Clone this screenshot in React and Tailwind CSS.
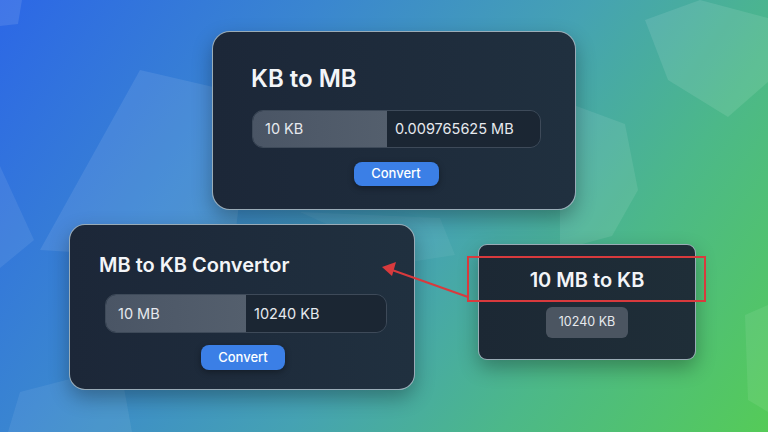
import React from 'react';

const FONT = { fontFamily: 'Inter, "Noto Sans", "Liberation Sans", sans-serif' };

function Backdrop() {
  // soft translucent polygons floating on the gradient
  return (
    <svg className="absolute inset-0" width="768" height="432" viewBox="0 0 768 432">
      <polygon points="0,0 22,0 18,24 0,26" fill="#fff" fillOpacity="0.1" />
      <polygon points="140,70 252,96 232,262 40,250" fill="#fff" fillOpacity="0.09" />
      <polygon points="0,166 34,240 0,268" fill="#fff" fillOpacity="0.08" />
      <polygon points="645,20 700,0 768,18 768,82 728,117 668,80" fill="#fff" fillOpacity="0.1" />
      <polygon points="560,100 625,124 638,190 612,236 560,250" fill="#fff" fillOpacity="0.09" />
      <polygon points="745,315 768,305 768,412 748,400" fill="#fff" fillOpacity="0.08" />
      <polygon points="20,392 120,366 132,432 8,432" fill="#fff" fillOpacity="0.07" />
      <polygon points="300,212 440,218 455,255 410,262" fill="#fff" fillOpacity="0.05" />
    </svg>
  );
}

function InputPair({ left, right, leftWidth, width, height }) {
  return (
    <div
      className="flex overflow-hidden rounded-[11px] border border-[#3e4a59] text-[14.5px] text-[#e6e9ee]"
      style={{ width, height }}
    >
      <div
        className="flex items-center pl-3 bg-gradient-to-r from-[#4a5565] to-[#545f6d]"
        style={{ width: leftWidth }}
      >
        {left}
      </div>
      <div className="flex flex-1 items-center pl-2 bg-[#1b2633]">{right}</div>
    </div>
  );
}

function ConvertButton({ className = '' }) {
  return (
    <button className={`h-6 rounded-lg bg-[#3b7fe6] text-[13px] font-medium text-white shadow-[0_2px_6px_rgba(0,0,0,0.35)] ${className}`}>
      Convert
    </button>
  );
}

export default function App() {
  return (
    <div
      className="relative w-[768px] h-[432px] overflow-hidden bg-[linear-gradient(125deg,#2c67e6_0%,#3a86d0_30%,#45a2b3_55%,#4cb889_75%,#55cb58_100%)]"
      style={FONT}
    >
      <Backdrop />

      {/* KB to MB */}
      <div className="absolute left-[212px] top-[31px] w-[364px] h-[179px] rounded-[18px] border-[1.5px] border-[#cfe3ec]/70 bg-gradient-to-r from-[#1c2738] to-[#20303f] shadow-[0_8px_20px_rgba(0,0,0,0.3)] pt-[35px] pl-[38px]">
        <h1 className="text-[24px] leading-[24px] font-semibold text-[#f3f5f8]">KB to MB</h1>
        <div className="mt-[19px] ml-px">
          <InputPair left="10 KB" right="0.009765625 MB" leftWidth={134} width={289} height={38} />
        </div>
        <div className="flex w-[290px] justify-center mt-[14px]">
          <ConvertButton className="w-[85px]" />
        </div>
      </div>

      {/* MB to KB Convertor */}
      <div className="absolute left-[69px] top-[224px] w-[346px] h-[166px] rounded-[16px] border-[1.5px] border-[#cfe3ec]/70 bg-gradient-to-r from-[#1c2738] to-[#20303f] shadow-[0_8px_20px_rgba(0,0,0,0.3)] pt-[30px] pl-[29px]">
        <h2 className="text-[20px] leading-[20px] font-semibold text-[#f3f5f8]">MB to KB Convertor</h2>
        <div className="mt-[19px] ml-[6px]">
          <InputPair left="10 MB" right="10240 KB" leftWidth={140} width={282} height={39} />
        </div>
        <div className="flex w-[288px] justify-center mt-[12px]">
          <ConvertButton className="w-[84px] h-[25px]" />
        </div>
      </div>

      {/* 10 MB to KB */}
      <div className="absolute left-[478px] top-[244px] w-[218px] h-[116px] rounded-[9px] border-[1.5px] border-[#cfe3ec]/70 bg-gradient-to-r from-[#1c2834] to-[#1f2e38] shadow-[0_8px_20px_rgba(0,0,0,0.3)] pt-[25px] flex flex-col items-center">
        <h3 className="text-[20px] leading-[21px] font-semibold text-[#f3f5f8]">10 MB to KB</h3>
        <div className="mt-[16px] flex h-[31px] w-[82px] items-center justify-center rounded-md bg-[#4b5561] text-[12.5px] text-[#e6e9ee]">
          10240 KB
        </div>
      </div>

      {/* annotation */}
      <div className="absolute left-[467px] top-[256px] w-[239px] h-[46px] border-2 border-[#d83a3d]" />
      <svg className="absolute inset-0 pointer-events-none" width="768" height="432" viewBox="0 0 768 432">
        <line x1="468" y1="297" x2="392" y2="270" stroke="#d83a3d" strokeWidth="2" />
        <polygon points="382,267 396,262 392,276" fill="#d83a3d" />
      </svg>
    </div>
  );
}
